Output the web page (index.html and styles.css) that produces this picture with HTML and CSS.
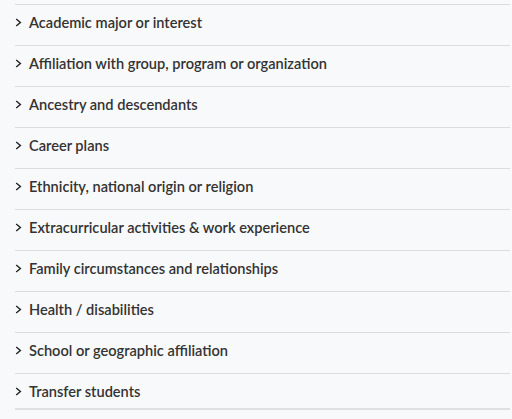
FILE: index.html
```html
<!DOCTYPE html>
<html>
<head>
<meta charset="utf-8">
<link rel="stylesheet" href="styles.css">
</head>
<body>
<ul class="list">
  <li class="item"><svg class="chev" viewBox="0 0 7 9"><path d="M1.2 1l4.2 3.5L1.2 8"/></svg><span>Academic major or interest</span></li>
  <li class="item"><svg class="chev" viewBox="0 0 7 9"><path d="M1.2 1l4.2 3.5L1.2 8"/></svg><span>Affiliation with group, program or organization</span></li>
  <li class="item"><svg class="chev" viewBox="0 0 7 9"><path d="M1.2 1l4.2 3.5L1.2 8"/></svg><span>Ancestry and descendants</span></li>
  <li class="item"><svg class="chev" viewBox="0 0 7 9"><path d="M1.2 1l4.2 3.5L1.2 8"/></svg><span>Career plans</span></li>
  <li class="item"><svg class="chev" viewBox="0 0 7 9"><path d="M1.2 1l4.2 3.5L1.2 8"/></svg><span>Ethnicity, national origin or religion</span></li>
  <li class="item"><svg class="chev" viewBox="0 0 7 9"><path d="M1.2 1l4.2 3.5L1.2 8"/></svg><span>Extracurricular activities &amp; work experience</span></li>
  <li class="item"><svg class="chev" viewBox="0 0 7 9"><path d="M1.2 1l4.2 3.5L1.2 8"/></svg><span>Family circumstances and relationships</span></li>
  <li class="item"><svg class="chev" viewBox="0 0 7 9"><path d="M1.2 1l4.2 3.5L1.2 8"/></svg><span>Health / disabilities</span></li>
  <li class="item"><svg class="chev" viewBox="0 0 7 9"><path d="M1.2 1l4.2 3.5L1.2 8"/></svg><span>School or geographic affiliation</span></li>
  <li class="item last"><svg class="chev" viewBox="0 0 7 9"><path d="M1.2 1l4.2 3.5L1.2 8"/></svg><span>Transfer students</span></li>
</ul>
</body>
</html>
```
FILE: styles.css
```css
html, body {
  margin: 0;
  padding: 0;
  background: #f8f9fa;
}
body {
  font-family: Lato, "Open Sans", sans-serif;
  color: #333;
}
.list {
  list-style: none;
  margin: 4px 2px 0 15px;
  padding: 0;
  border-bottom: 2px solid #e0e0e0;
}
.item {
  display: flex;
  align-items: center;
  gap: 7px;
  height: 35px;
  padding: 0 0 5px 0;
  border-top: 1px solid #dcdcdc;
  font-size: 14.6px;
  font-weight: 600;
}
.item.last {
  height: 34px;
  padding-bottom: 0;
}
.chev {
  width: 7px;
  height: 9px;
  fill: none;
  stroke: #222;
  stroke-width: 1.4;
}
```
